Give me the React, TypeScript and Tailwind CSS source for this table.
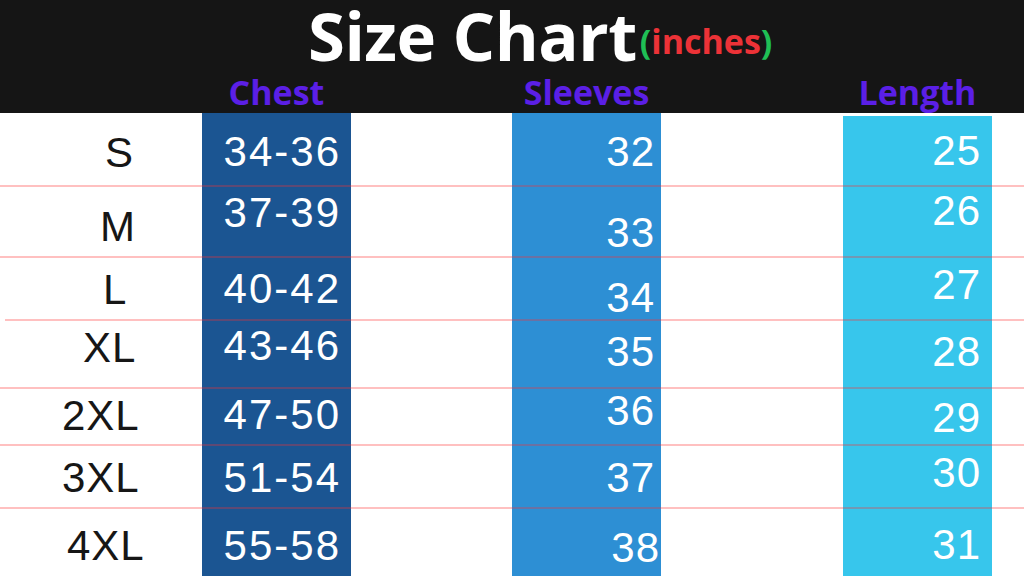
import React from 'react';

const cols = 'grid grid-cols-[202px_149px_161px_149px_182px_149px_1fr]';

export default function App() {
  return (
    <div className="w-[1024px] h-[576px] overflow-hidden bg-white flex flex-col font-['Liberation_Sans',Arial,sans-serif]">
      {/* HEADER */}
      <header className="h-[113px] bg-[#151515] flex flex-col font-['Open_Sans',sans-serif] font-bold">
        <div className="flex items-end pl-[308px] h-[70px]">
          <span className="text-[67px] leading-[70px] text-white tracking-[-0.5px]">Size Chart</span>
          <span className="text-[34px] leading-[34px] ml-[3px] mb-[12px]">
            <span className="text-[#1fbf55]">(</span>
            <span className="text-[#ec3237]">inches</span>
            <span className="text-[#1fbf55]">)</span>
          </span>
        </div>
        <div className={`${cols} mt-[5px] text-[34px] leading-[34px] text-[#5b1fe6]`}>
          <div />
          <div className="text-center">Chest</div>
          <div />
          <div className="text-center">Sleeves</div>
          <div />
          <div className="text-center">Length</div>
        </div>
      </header>

      {/* BODY */}
      <main className={`${cols} relative flex-1 text-[42px] leading-[44px]`}>
        <div className="flex flex-col text-[#161616] tracking-[1px]">
          <div className="mt-[18px] ml-[105px]">S</div>
          <div className="mt-[30px] ml-[100px]">M</div>
          <div className="mt-[19px] ml-[103px]">L</div>
          <div className="mt-[14px] ml-[83px]">XL</div>
          <div className="mt-[24px] ml-[62px]">2XL</div>
          <div className="mt-[18px] ml-[62px]">3XL</div>
          <div className="mt-[24px] ml-[67px]">4XL</div>
        </div>

        <div className="flex flex-col items-end pr-[10px] bg-[#1b5592] text-white tracking-[2px]">
          <div className="mt-[17px]">34-36</div>
          <div className="mt-[17px]">37-39</div>
          <div className="mt-[32px]">40-42</div>
          <div className="mt-[13px]">43-46</div>
          <div className="mt-[25px]">47-50</div>
          <div className="mt-[19px]">51-54</div>
          <div className="mt-[24px]">55-58</div>
        </div>

        <div />

        <div className="flex flex-col items-end pr-[6px] bg-[#2d8fd4] text-white tracking-[1px]">
          <div className="mt-[17px]">32</div>
          <div className="mt-[37px]">33</div>
          <div className="mt-[21px]">34</div>
          <div className="mt-[10px]">35</div>
          <div className="mt-[15px]">36</div>
          <div className="mt-[23px]">37</div>
          <div className="mt-[26px] mr-[-5px]">38</div>
        </div>

        <div />

        <div className="flex flex-col items-end pr-[11px] mt-[3px] bg-[#37c6ec] text-white tracking-[1px]">
          <div className="mt-[13px]">25</div>
          <div className="mt-[16px]">26</div>
          <div className="mt-[30px]">27</div>
          <div className="mt-[23px]">28</div>
          <div className="mt-[22px]">29</div>
          <div className="mt-[11px]">30</div>
          <div className="mt-[28px]">31</div>
        </div>

        {/* row rules drawn over the columns */}
        <div className="absolute left-0 right-0 top-[72px] h-[2px] bg-[#ff3030]/30" />
        <div className="absolute left-0 right-0 top-[143px] h-[2px] bg-[#ff3030]/30" />
        <div className="absolute left-[5px] right-0 top-[206px] h-[2px] bg-[#ff3030]/30" />
        <div className="absolute left-0 right-0 top-[274px] h-[2px] bg-[#ff3030]/30" />
        <div className="absolute left-0 right-0 top-[331px] h-[2px] bg-[#ff3030]/30" />
        <div className="absolute left-0 right-0 top-[394px] h-[2px] bg-[#ff3030]/30" />
      </main>
    </div>
  );
}
